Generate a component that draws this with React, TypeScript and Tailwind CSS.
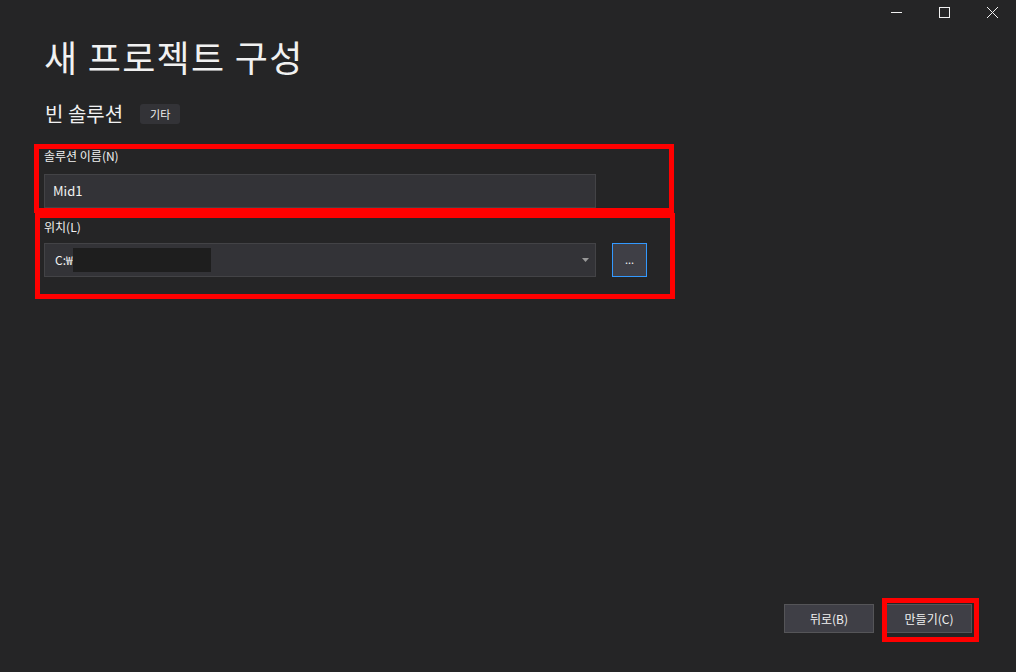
import React from 'react';

const font = { fontFamily: '"Noto Sans CJK KR", "Noto Sans", sans-serif' };

const WindowControls: React.FC = () => (
  <div className="flex h-[24px] justify-end pr-[0px] text-[#f1f1f1]">
    <div className="flex w-[48px] items-center justify-center">
      <svg width="11" height="11" viewBox="0 0 11 11">
        <path d="M0 5.5h11" stroke="currentColor" strokeWidth="1" />
      </svg>
    </div>
    <div className="flex w-[48px] items-center justify-center">
      <svg width="11" height="11" viewBox="0 0 11 11">
        <rect x="0.5" y="0.5" width="10" height="10" fill="none" stroke="currentColor" strokeWidth="1" />
      </svg>
    </div>
    <div className="flex w-[48px] items-center justify-center">
      <svg width="11" height="11" viewBox="0 0 11 11">
        <path d="M0 0l11 11M11 0L0 11" stroke="currentColor" strokeWidth="1" />
      </svg>
    </div>
  </div>
);

export default function App() {
  return (
    <div
      className="flex h-[672px] w-[1016px] flex-col overflow-hidden bg-[#252526] text-[#f1f1f1]"
      style={font}
    >
      <WindowControls />

      <h1 className="ml-[44px] mt-[10px] text-[36px] font-normal leading-[44px] tracking-[1.3px]">
        새 프로젝트 구성
      </h1>

      <div className="ml-[45px] mt-[23px] flex items-center gap-[17px]">
        <span className="text-[20px] leading-[26px]">빈 솔루션</span>
        <span className="rounded-[3px] bg-[#333337] px-[10px] py-[1px] text-[11px] leading-[18px]">
          기타
        </span>
      </div>

      <div className="ml-[34px] mt-[17px] h-[69px] w-[640px] border-[5px] border-[#ff0000] pl-[5px]">
        <label className="block pt-[0px] text-[12px] leading-[14px]">솔루션 이름(N)</label>
        <div className="mt-[11px] flex h-[34px] w-[552px] items-center border border-[#434346] bg-[#333337] px-[8px] text-[13px]">
          Mid1
        </div>
      </div>

      <div className="ml-[35px] h-[86px] w-[640px] border-[5px] border-[#ff0000] pl-[4px]">
        <label className="block pt-[2px] text-[12px] leading-[14px]">위치(L)</label>
        <div className="mt-[9px] flex items-center gap-[16px]">
          <div className="flex h-[34px] w-[552px] items-center border border-[#434346] bg-[#333337] pl-[10px] pr-[6px] text-[12px]">
            <span>C:₩</span>
            <span className="h-[24px] w-[138px] bg-[#1e1e1e]" />
            <span className="flex-1" />
            <svg width="7" height="4" viewBox="0 0 7 4">
              <path d="M0 0h7L3.5 4z" fill="#999999" />
            </svg>
          </div>
          <button className="flex h-[34px] w-[35px] items-center justify-center border border-[#3399ff] bg-[#3f3f46] pb-[2px] text-[11px] leading-none">
            ...
          </button>
        </div>
      </div>

      <div className="mt-auto flex items-center justify-end gap-[12px] pb-[39px] pr-[44px]">
        <button className="h-[29px] w-[90px] border border-[#555558] bg-[#3f3f46] text-[12px]">
          뒤로(B)
        </button>
        <div className="relative">
          <button className="h-[29px] w-[86px] border border-[#555558] bg-[#3f3f46] text-[12px]">
            만들기(C)
          </button>
          <div className="pointer-events-none absolute left-[-4px] top-[-6px] h-[44px] w-[97px] border-[5px] border-[#ff0000]" />
        </div>
      </div>
    </div>
  );
}
